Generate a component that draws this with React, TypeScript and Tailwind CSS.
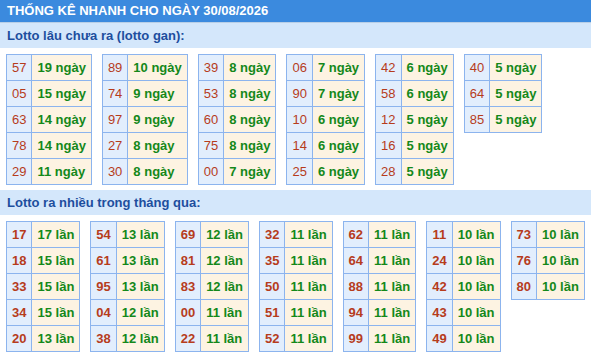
import React from 'react';

type Cell = [string, string];

// Lotto gan: số lâu chưa ra
const ganTables: Cell[][] = [
  [['57', '19 ngày'], ['05', '15 ngày'], ['63', '14 ngày'], ['78', '14 ngày'], ['29', '11 ngày']],
  [['89', '10 ngày'], ['74', '9 ngày'], ['97', '9 ngày'], ['27', '8 ngày'], ['30', '8 ngày']],
  [['39', '8 ngày'], ['53', '8 ngày'], ['60', '8 ngày'], ['75', '8 ngày'], ['00', '7 ngày']],
  [['06', '7 ngày'], ['90', '7 ngày'], ['10', '6 ngày'], ['14', '6 ngày'], ['25', '6 ngày']],
  [['42', '6 ngày'], ['58', '6 ngày'], ['12', '5 ngày'], ['16', '5 ngày'], ['28', '5 ngày']],
  [['40', '5 ngày'], ['64', '5 ngày'], ['85', '5 ngày']],
];

// Lotto ra nhiều trong tháng
const hotTables: Cell[][] = [
  [['17', '17 lần'], ['18', '15 lần'], ['33', '15 lần'], ['34', '15 lần'], ['20', '13 lần']],
  [['54', '13 lần'], ['61', '13 lần'], ['95', '13 lần'], ['04', '12 lần'], ['38', '12 lần']],
  [['69', '12 lần'], ['81', '12 lần'], ['83', '12 lần'], ['00', '11 lần'], ['22', '11 lần']],
  [['32', '11 lần'], ['35', '11 lần'], ['50', '11 lần'], ['51', '11 lần'], ['52', '11 lần']],
  [['62', '11 lần'], ['64', '11 lần'], ['88', '11 lần'], ['94', '11 lần'], ['99', '11 lần']],
  [['11', '10 lần'], ['24', '10 lần'], ['42', '10 lần'], ['43', '10 lần'], ['49', '10 lần']],
  [['73', '10 lần'], ['76', '10 lần'], ['80', '10 lần']],
];

const LottoTable: React.FC<{ rows: Cell[]; boldNum?: boolean }> = ({ rows, boldNum }) => (
  <table className="border-collapse whitespace-nowrap">
    <tbody>
      {rows.map(([num, val]) => (
        <tr key={num} className="h-[26px]">
          <td
            className={`border border-[#8cb4ee] bg-[#e2eefd] px-[5px] text-center text-[13px] leading-none text-[#b63c1c] ${
              boldNum ? 'font-bold' : 'font-normal'
            }`}
          >
            {num}
          </td>
          <td className="border border-[#8cb4ee] bg-[#fdf3e2] px-[5px] text-[13px] font-bold leading-none text-[#14881a]">
            {val}
          </td>
        </tr>
      ))}
    </tbody>
  </table>
);

const SectionTitle: React.FC<{ title: string }> = ({ title }) => (
  <div className="flex h-[25px] items-center bg-[#d4e7fb] pl-[7px] text-[13px] font-bold text-[#1d4e9e]">
    {title}
  </div>
);

export default function App() {
  return (
    <div className="w-[591px] h-[355px] overflow-hidden bg-white font-['Liberation_Sans',Arial,sans-serif]">
      <div className="flex h-[23px] items-center border-b border-[#b9cfe6] bg-[#3b8ade] pl-[7px] text-[13px] font-bold text-white">
        THỐNG KÊ NHANH CHO NGÀY 30/08/2026
      </div>

      <SectionTitle title="Lotto lâu chưa ra (lotto gan):" />
      <div className="flex items-start gap-[10px] pl-[6px] pt-[6px]">
        {ganTables.map((rows, i) => (
          <LottoTable key={i} rows={rows} />
        ))}
      </div>

      <div className="mt-[5px]">
        <SectionTitle title="Lotto ra nhiều trong tháng qua:" />
      </div>
      <div className="flex items-start gap-[10px] pl-[6px] pt-[6px]">
        {hotTables.map((rows, i) => (
          <LottoTable key={i} rows={rows} boldNum />
        ))}
      </div>
    </div>
  );
}
